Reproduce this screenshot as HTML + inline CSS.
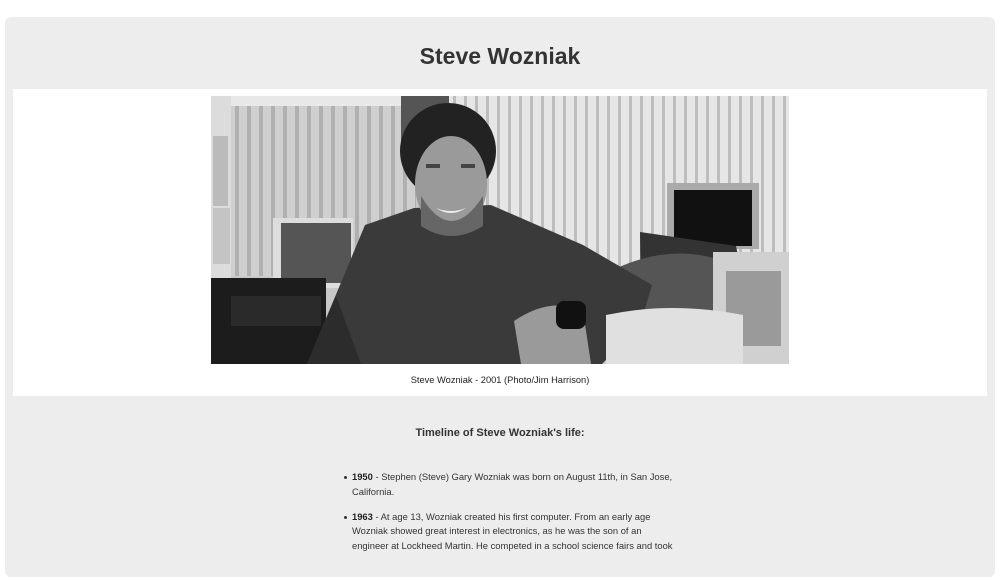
<!DOCTYPE html>
<html><head><meta charset="utf-8"><style>
*{margin:0;padding:0;box-sizing:border-box}
html,body{width:1000px;height:557px;overflow:hidden;background:#fff;font-family:"Liberation Sans",Arial,sans-serif;color:#333}
.box{position:absolute;left:5px;top:17px;width:990px;height:560px;background:#ededed;border-radius:6px}
h1{position:absolute;left:0;width:1000px;top:41px;text-align:center;font-size:23px;font-weight:bold;color:#333;line-height:30px}
.fig{position:absolute;left:13px;top:89px;width:974px;height:307px;background:#fff}
.photo{position:absolute;left:211px;top:96px;width:578px;height:268px}
.cap{position:absolute;left:0;width:1000px;top:375px;text-align:center;font-size:9.3px;color:#222}
h3{position:absolute;left:0;width:1000px;top:427px;text-align:center;font-size:11px;font-weight:bold;color:#333}
ul{position:absolute;left:352px;top:470px;width:325px;font-size:9.4px;line-height:14.5px;color:#333;list-style:none}
li{position:relative;margin-bottom:10.5px}
li:before{content:"";position:absolute;left:-8px;top:6px;width:3px;height:3px;background:#333;border-radius:50%}
b{color:#222}
</style></head><body>
<div class="box"></div>
<h1>Steve Wozniak</h1>
<div class="fig"></div>
<svg class="photo" viewBox="0 0 578 268" preserveAspectRatio="none">
<defs>
<pattern id="bl" width="11" height="10" patternUnits="userSpaceOnUse"><rect width="11" height="10" fill="#e6e6e6"/><rect width="3" height="10" fill="#bdbdbd"/></pattern>
<pattern id="bl2" width="12" height="10" patternUnits="userSpaceOnUse"><rect width="12" height="10" fill="#cfcfcf"/><rect width="4" height="10" fill="#b0b0b0"/></pattern>
</defs>
<rect width="578" height="268" fill="#c8c8c8"/>
<rect x="0" y="0" width="240" height="12" fill="#e8e8e8"/>
<rect x="20" y="10" width="185" height="170" fill="url(#bl2)"/>
<rect x="0" y="0" width="20" height="268" fill="#dcdcdc"/>
<rect x="2" y="40" width="15" height="70" fill="#bbb"/>
<rect x="2" y="112" width="17" height="56" fill="#c4c4c4"/>
<rect x="190" y="0" width="50" height="60" fill="#555"/>
<rect x="238" y="0" width="340" height="185" fill="url(#bl)"/>
<rect x="456" y="87" width="92" height="66" fill="#aaa"/>
<rect x="463" y="94" width="78" height="56" fill="#111"/>
<rect x="62" y="122" width="80" height="70" fill="#ddd"/>
<rect x="70" y="127" width="70" height="60" fill="#555"/>
<rect x="0" y="182" width="115" height="86" fill="#1c1c1c"/>
<rect x="20" y="200" width="90" height="30" fill="#2a2a2a"/>
<path d="M429 136 L525 150 L540 222 L430 222 Z" fill="#333"/>
<path d="M400 175 Q470 140 535 175 L540 222 L420 222 Z" fill="#555"/>
<path d="M502 156 L578 156 L578 268 L502 268 Z" fill="#d0d0d0"/>
<rect x="515" y="175" width="55" height="75" fill="#9a9a9a"/>
<path d="M96 268 L154 129 L203 112 L280 109 L372 149 L441 189 L429 229 L391 268 Z" fill="#3a3a3a"/>
<path d="M96 268 L125 200 L150 268 Z" fill="#2c2c2c"/>
<path d="M303 225 Q340 200 372 215 L380 268 L310 268 Z" fill="#9a9a9a"/>
<rect x="345" y="205" width="30" height="28" rx="8" fill="#111"/>
<path d="M395 219 Q460 205 532 219 L532 268 L395 268 Z" fill="#e0e0e0"/>
<ellipse cx="237" cy="55" rx="48" ry="48" fill="#222"/>
<ellipse cx="240" cy="88" rx="36" ry="48" fill="#9a9a9a"/>
<path d="M210 100 Q240 150 272 100 L272 130 Q240 150 210 130 Z" fill="#666"/>
<path d="M225 112 Q240 122 255 112 Q240 118 225 112 Z" fill="#eee"/>
<rect x="215" y="68" width="14" height="4" fill="#444"/>
<rect x="250" y="68" width="14" height="4" fill="#444"/>
</svg>
<div class="cap">Steve Wozniak - 2001 (Photo/Jim Harrison)</div>
<h3>Timeline of Steve Wozniak's life:</h3>
<ul>
<li><b>1950</b> - Stephen (Steve) Gary Wozniak was born on August 11th, in San Jose, California.</li>
<li><b>1963</b> - At age 13, Wozniak created his first computer. From an early age Wozniak showed great interest in electronics, as he was the son of an engineer at Lockheed Martin. He competed in a school science fairs and took</li>
</ul>
</body></html>
